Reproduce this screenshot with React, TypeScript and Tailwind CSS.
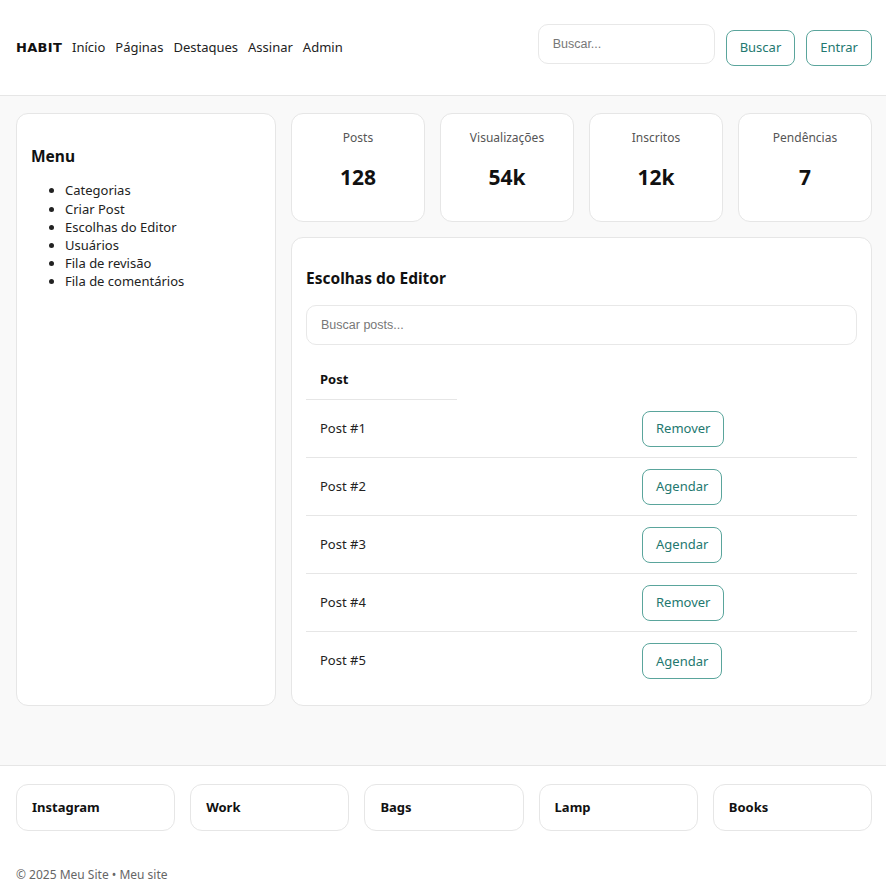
import React from "react";

const font = { fontFamily: '"Noto Sans", "Open Sans", sans-serif' };

const stats = [
  { label: "Posts", value: "128" },
  { label: "Visualizações", value: "54k" },
  { label: "Inscritos", value: "12k" },
  { label: "Pendências", value: "7" },
];

const posts = [
  { name: "Post #1", action: "Remover" },
  { name: "Post #2", action: "Agendar" },
  { name: "Post #3", action: "Agendar" },
  { name: "Post #4", action: "Remover" },
  { name: "Post #5", action: "Agendar" },
];

const menu = [
  "Categorias",
  "Criar Post",
  "Escolhas do Editor",
  "Usuários",
  "Fila de revisão",
  "Fila de comentários",
];

const footerCards = ["Instagram", "Work", "Bags", "Lamp", "Books"];

function OutlineButton({ children }: { children: React.ReactNode }) {
  return (
    <button className="h-[36px] px-[13px] rounded-lg border-[1.5px] border-[#5aa59c] text-[#23786f] text-[13px] bg-white leading-none">
      {children}
    </button>
  );
}

export default function App() {
  return (
    <div className="w-[886px] min-h-[880px] bg-white text-[#1a1a1a]" style={font}>
      <header className="h-[96px] flex items-center justify-between pl-4 pr-[14px] border-b border-[#e6e6e6] bg-white">
        <nav className="flex items-center gap-[10px] text-[13px] text-[#222]">
          <span className="font-bold tracking-[0.3px] text-[13px] text-[#111]" style={{ fontFamily: '"DejaVu Sans", sans-serif' }}>HABIT</span>
          <a>Início</a>
          <a>Páginas</a>
          <a>Destaques</a>
          <a>Assinar</a>
          <a>Admin</a>
        </nav>
        <div className="flex items-center">
          <input
            placeholder="Buscar..."
            className="w-[177px] h-[40px] mb-2 mr-[11px] rounded-[10px] border border-[#e8e8e8] px-[14px] text-[12.5px] placeholder:text-[#777] outline-none"
            style={{ fontFamily: '"Liberation Sans", Arial, sans-serif' }}
          />
          <div className="flex items-center gap-[11px]">
            <OutlineButton>Buscar</OutlineButton>
            <OutlineButton>Entrar</OutlineButton>
          </div>
        </div>
      </header>

      <main className="bg-[#f9f9f9] pl-4 pr-[14px] pt-[17px] pb-[59px] flex gap-[15px] items-stretch">
        <aside className="w-[260px] shrink-0 bg-white border border-[#e6e6e6] rounded-xl px-[14px] pt-[33px]">
          <h2 className="text-[15.5px] font-bold text-[#111] leading-tight">Menu</h2>
          <ul className="list-disc pl-[34px] mt-[15px] text-[13px] leading-[18.2px] text-[#222]">
            {menu.map((m) => (
              <li key={m}>{m}</li>
            ))}
          </ul>
        </aside>

        <section className="flex-1 flex flex-col gap-[15px]">
          <div className="grid grid-cols-4 gap-[15px]">
            {stats.map((s) => (
              <div
                key={s.label}
                className="h-[109px] bg-white border border-[#e6e6e6] rounded-xl flex flex-col items-center pt-[15px]"
              >
                <div className="text-[12px] text-[#555] leading-[18px]">{s.label}</div>
                <div className="text-[21px] font-bold text-[#111] mt-[17px] leading-[26px]">{s.value}</div>
              </div>
            ))}
          </div>

          <div className="bg-white border border-[#e6e6e6] rounded-xl px-[14px] pt-[29px] pb-[15px]">
            <h2 className="text-[15.5px] font-bold text-[#111] leading-[22px]">Escolhas do Editor</h2>
            <input
              placeholder="Buscar posts..."
              className="mt-[16px] w-full h-[40px] rounded-[10px] border border-[#e8e8e8] px-[14px] text-[12.5px] placeholder:text-[#777] outline-none"
              style={{ fontFamily: '"Liberation Sans", Arial, sans-serif' }}
            />
            <div className="mt-[15px]">
              <div className="flex">
                <div className="w-[151px] h-[40px] flex items-center px-[14px] font-bold text-[13px] text-[#111] border-b border-[#e6e6e6]">
                  Post
                </div>
              </div>
              {posts.map((p, i) => (
                <div
                  key={p.name}
                  className={`flex items-center h-[58px] ${i < posts.length - 1 ? "border-b border-[#e6e6e6]" : ""}`}
                >
                  <div className="w-[321px] px-[14px] text-[13px] text-[#222]">{p.name}</div>
                  <div className="pl-[15px]">
                    <OutlineButton>{p.action}</OutlineButton>
                  </div>
                </div>
              ))}
            </div>
          </div>
        </section>
      </main>

      <footer className="border-t border-[#e6e6e6] bg-white pl-4 pr-[14px] pt-[18px]">
        <div className="grid grid-cols-5 gap-[15px]">
          {footerCards.map((c) => (
            <div
              key={c}
              className="h-[47px] border border-[#e6e6e6] rounded-xl flex items-center px-[15px] text-[13px] font-bold text-[#111]"
            >
              {c}
            </div>
          ))}
        </div>
        <div className="mt-[35px] text-[12px] text-[#666]">© 2025 Meu Site • Meu site</div>
      </footer>
    </div>
  );
}
